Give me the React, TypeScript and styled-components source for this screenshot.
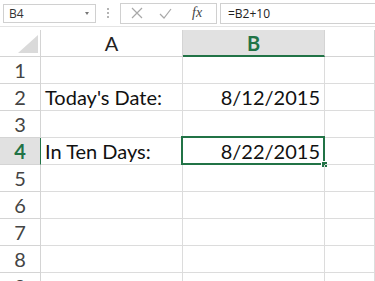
import styled, { createGlobalStyle } from "styled-components";

const GlobalStyle = createGlobalStyle`
  html, body {
    margin: 0;
    padding: 0;
    background: #ffffff;
    overflow: hidden;
  }
`;

const Sheet = styled.div`
  width: 375px;
  height: 281px;
  overflow: hidden;
  background: #ffffff;
  font-family: Lato, "Open Sans", sans-serif;
`;

const Toolbar = styled.div`
  height: 26px;
  display: flex;
  align-items: center;
  padding-left: 3px;
  border-bottom: 1px solid #e4e4e4;
`;

const NameBox = styled.div`
  width: 91px;
  height: 19px;
  border: 1px solid #d0d0d0;
  display: flex;
  align-items: center;
  justify-content: space-between;
  padding: 0 6px 0 5px;
  box-sizing: border-box;
  width: 93px;
  font-family: "Open Sans", sans-serif;
  font-size: 12px;
  color: #333;
`;

const Caret = styled.span`
  width: 0;
  height: 0;
  border-left: 2.5px solid transparent;
  border-right: 2.5px solid transparent;
  border-top: 3px solid #777;
`;

const Grip = styled.div`
  width: 24px;
  display: flex;
  flex-direction: column;
  align-items: center;
  gap: 2px;
  span {
    width: 2px;
    height: 2px;
    background: #b4b4b4;
  }
`;

const Buttons = styled.div`
  width: 97px;
  height: 21px;
  box-sizing: border-box;
  border: 1px solid #d0d0d0;
  display: flex;
  align-items: center;
  padding-left: 10px;
  gap: 16px;
`;

const Fx = styled.span`
  font-family: "Liberation Serif", serif;
  font-style: italic;
  font-size: 14px;
  color: #444;
  margin-left: 4px;
`;

const Formula = styled.div`
  flex: 1;
  height: 21px;
  margin-left: 3px;
  box-sizing: border-box;
  border: 1px solid #d0d0d0;
  border-right: none;
  display: flex;
  align-items: center;
  padding-left: 7px;
  font-family: "Open Sans", sans-serif;
  font-size: 12px;
  color: #222;
`;

const Grid = styled.div`
  display: grid;
  grid-template-columns: 41px 142px 142px 1fr;
  grid-auto-rows: 27px;
  padding-top: 3px;
`;

const Corner = styled.div`
  border-right: 1px solid #d4d4d4;
  border-bottom: 1px solid #d4d4d4;
  position: relative;
  &::after {
    content: "";
    position: absolute;
    right: 2px;
    bottom: 3px;
    width: 0;
    height: 0;
    border-left: 20px solid transparent;
    border-bottom: 18px solid #dadada;
  }
`;

const ColHead = styled.div<{ $active?: boolean }>`
  display: flex;
  align-items: center;
  justify-content: center;
  font-size: 20px;
  border-right: 1px solid #d4d4d4;
  border-bottom: ${(p) => (p.$active ? "2px solid #217346" : "1px solid #d4d4d4")};
  background: ${(p) => (p.$active ? "#e1e1e1" : "#ffffff")};
  color: ${(p) => (p.$active ? "#217346" : "#222")};
  font-weight: ${(p) => (p.$active ? 700 : 400)};
`;

const RowHead = styled.div<{ $active?: boolean }>`
  display: flex;
  align-items: center;
  justify-content: center;
  font-size: 20px;
  border-bottom: 1px solid #d4d4d4;
  border-right: 1px solid ${(p) => (p.$active ? "#217346" : "#d4d4d4")};
  background: ${(p) => (p.$active ? "#e1e1e1" : "#ffffff")};
  color: ${(p) => (p.$active ? "#217346" : "#444")};
  font-weight: ${(p) => (p.$active ? 700 : 400)};
`;

const Cell = styled.div<{ $right?: boolean; $selected?: boolean }>`
  position: relative;
  display: flex;
  align-items: center;
  justify-content: ${(p) => (p.$right ? "flex-end" : "flex-start")};
  padding: 0 4px;
  font-size: 20px;
  color: #111;
  border-right: 1px solid #dcdcdc;
  border-bottom: 1px solid #dcdcdc;
  ${(p) =>
    p.$selected &&
    `
    &::before {
      content: "";
      position: absolute;
      left: -2px;
      top: -2px;
      right: -1px;
      bottom: -1px;
      border: 2px solid #217346;
    }
    &::after {
      content: "";
      position: absolute;
      right: -4px;
      bottom: -4px;
      width: 5px;
      height: 5px;
      background: #217346;
      border: 1px solid #fff;
    }
  `}
`;

const rows: { a: string; b: string }[] = [
  { a: "", b: "" },
  { a: "Today's Date:", b: "8/12/2015" },
  { a: "", b: "" },
  { a: "In Ten Days:", b: "8/22/2015" },
  { a: "", b: "" },
  { a: "", b: "" },
  { a: "", b: "" },
  { a: "", b: "" },
  { a: "", b: "" },
];

export default function App() {
  return (
    <Sheet>
      <GlobalStyle />
      <Toolbar>
        <NameBox>
          B4
          <Caret />
        </NameBox>
        <Grip>
          <span />
          <span />
          <span />
        </Grip>
        <Buttons>
          <svg width="12" height="12" viewBox="0 0 12 12">
            <path d="M1 1 L11 11 M11 1 L1 11" stroke="#a8a8a8" strokeWidth="1.2" fill="none" />
          </svg>
          <svg width="13" height="11" viewBox="0 0 13 11">
            <path d="M1 6 L5 10 L12 1" stroke="#a8a8a8" strokeWidth="1.2" fill="none" />
          </svg>
          <Fx>fx</Fx>
        </Buttons>
        <Formula>=B2+10</Formula>
      </Toolbar>
      <Grid>
        <Corner />
        <ColHead>A</ColHead>
        <ColHead $active>B</ColHead>
        <ColHead />
        {rows.map((r, i) => (
          <RowRender key={i} n={i + 1} a={r.a} b={r.b} />
        ))}
      </Grid>
    </Sheet>
  );
}

function RowRender({ n, a, b }: { n: number; a: string; b: string }) {
  const active = n === 4;
  return (
    <>
      <RowHead $active={active}>{n}</RowHead>
      <Cell>{a}</Cell>
      <Cell $right $selected={active}>
        {b}
      </Cell>
      <Cell />
    </>
  );
}
